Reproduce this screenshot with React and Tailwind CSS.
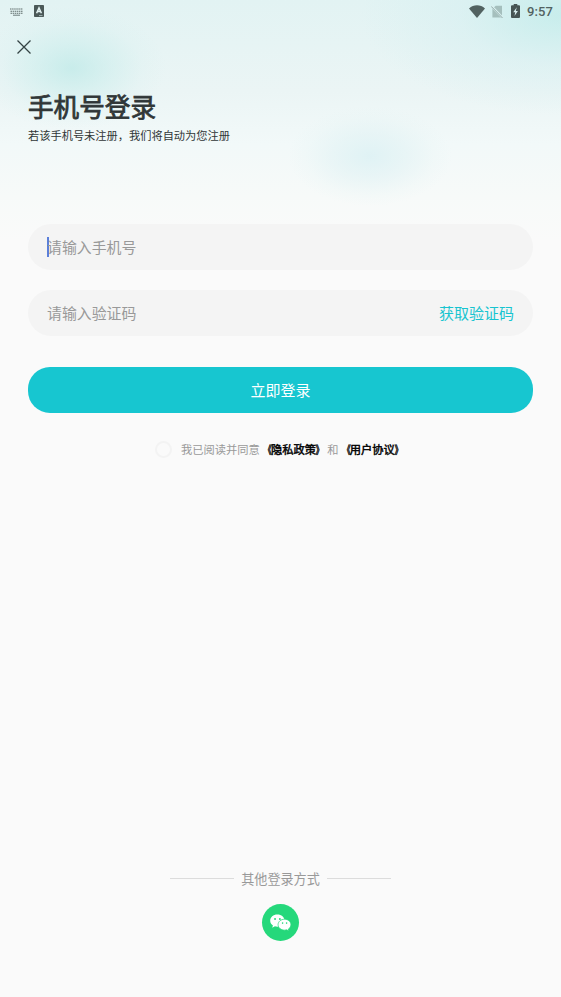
import React, { useState } from 'react';

const KeyboardIcon = () => (
  <svg width="13" height="8" viewBox="0 0 13 8" fill="none" stroke="#5f6d6c">
    <path d="M0 1h13M0.5 3.2h12M0.5 5.3h12" strokeWidth="1.1" strokeDasharray="1.5 0.6" />
    <path d="M3 7.2h7" strokeWidth="0.9" />
  </svg>
);

const InputMethodIcon = () => (
  <svg width="10" height="12" viewBox="0 0 10 12">
    <rect width="10" height="12" rx="0.8" fill="#4b5958" />
    <path d="M2.6 8.2 5 2.9 7.4 8.2M3.6 6.6h2.8" fill="none" stroke="#e4f3f3" strokeWidth="1.5" />
    <path d="M5 10.6h3.5" stroke="#c9dcdc" strokeWidth="0.7" />
  </svg>
);

const WifiIcon = () => (
  <svg width="16" height="13" viewBox="0 0 16 13" fill="#526261">
    <path d="M0 3.4C4.5-.9 11.5-.9 16 3.4L8 13Z" />
  </svg>
);

const NoSimIcon = () => (
  <svg width="12" height="13" viewBox="0 0 12 13">
    <path d="M2.2 3.1 4.8.7H11V12.4H1.4V3.6Z" fill="#a5bfbd" />
    <path d="M0 .6 12 13" stroke="#d9efef" strokeWidth="2.2" />
    <path d="M.2 1.4 11.5 13" stroke="#91aaa8" strokeWidth="1" />
  </svg>
);

const BatteryIcon = () => (
  <svg width="9" height="14" viewBox="0 0 9 14">
    <path d="M2.7 0h3.6v1.3H8Q9 1.3 9 2.3V13q0 1-1 1H1q-1 0-1-1V2.3q0-1 1-1h1.7Z" fill="#465554" />
    <path d="M5.8 3.2 2.2 8.2h2L3.5 12 6.9 6.9H4.8Z" fill="#d7eeee" />
  </svg>
);

const WechatIcon = () => (
  <svg width="21" height="18" viewBox="0 0 20 17">
    <path d="M7 .5C3.1.5.2 3 .2 6.3c0 1.9 1 3.5 2.6 4.6l-.7 2.1 2.6-1.3c.7.2 1.5.3 2.3.3 3.9 0 6.9-2.5 6.9-5.7S10.9.5 7 .5Z" fill="#fff" />
    <path d="M13.9 4.9c-3.5 0-6.2 2.3-6.2 5.2s2.7 5.2 6.2 5.2c.8 0 1.5-.1 2.1-.3l2 1.2-.5-1.9c1.4-1 2.4-2.4 2.4-4.2 0-2.9-2.5-5.2-6-5.2Z" fill="#fff" stroke="#25d87b" strokeWidth="0.7" />
    <g fill="#25d87b">
      <circle cx="4.8" cy="4.7" r="0.9" />
      <circle cx="9.4" cy="4.7" r="0.9" />
      <circle cx="12" cy="8.6" r="0.75" />
      <circle cx="15.8" cy="8.6" r="0.75" />
    </g>
  </svg>
);

const StatusBar = () => (
  <div className="flex h-[23px] items-center justify-between pl-[10px] pr-2">
    <div className="flex items-center gap-[11px]">
      <KeyboardIcon />
      <span className="-mt-px"><InputMethodIcon /></span>
    </div>
    <div className="flex items-center">
      <span className="-mt-px"><WifiIcon /></span>
      <span className="-mt-px ml-[6px]"><NoSimIcon /></span>
      <span className="-mt-[2px] ml-[8px]"><BatteryIcon /></span>
      <span className="ml-[7px] font-[Roboto,sans-serif] text-[13px] font-medium leading-none tracking-[0.1px] text-[#526261]">
        9:57
      </span>
    </div>
  </div>
);

// Policy link with tightened book title marks
const PolicyLink = ({ children }) => (
  <a className="flex text-black [-webkit-text-stroke:0.45px_#000]">
    <span className="origin-right translate-x-[0.5px] scale-x-[0.72]">《</span>
    <span>{children}</span>
    <span className="origin-left -translate-x-[0.5px] scale-x-[0.72]">》</span>
  </a>
);

const App = () => {
  const [phone, setPhone] = useState('');
  const [code, setCode] = useState('');
  const [agreed, setAgreed] = useState(false);

  return (
    <div className="relative flex h-[997px] w-[561px] flex-col overflow-hidden bg-[#fafafa] font-['Noto_Sans_CJK_SC',sans-serif]">
      {/* Header glow */}
      <div className="absolute inset-x-0 top-0 h-[240px] bg-[linear-gradient(180deg,#e2f3f3_0%,#ebf5f5_38%,#f2f9f9_60%,#f7faf9_82%,#fafafa_100%)]">
        <div className="h-full bg-[radial-gradient(ellipse_94px_62px_at_72px_68px,rgba(188,233,231,0.72),rgba(195,236,234,0.44)_40%,rgba(205,238,237,0.15)_75%,transparent),radial-gradient(ellipse_200px_100px_at_561px_15px,rgba(185,234,232,0.65),rgba(208,238,240,0.4)_50%,transparent),radial-gradient(ellipse_82px_50px_at_370px_156px,rgba(217,240,243,0.75),rgba(222,241,243,0.5)_45%,rgba(226,243,243,0.18)_78%,transparent)]" />
      </div>

      <div className="relative flex flex-1 flex-col">
        <StatusBar />

        <button className="ml-[17px] mt-[16.5px] h-[14px] w-[14px]" aria-label="关闭">
          <svg width="14" height="14" viewBox="0 0 14 14" stroke="#344344" strokeWidth="1.3">
            <path d="M.5.5l13 13M13.5.5l-13 13" />
          </svg>
        </button>

        <div className="mt-[33.5px] px-7">
          <h1 className="h-[38px] text-[25.6px] font-normal leading-[38px] text-[#303637] [-webkit-text-stroke:0.8px_#303637]">手机号登录</h1>
          <p className="mt-[2px] h-[17px] text-[11.23px] leading-[17px] text-[#303637]">若该手机号未注册，我们将自动为您注册</p>
        </div>

        <div className="mt-[80px] px-7">
          <div className="flex h-[46px] items-center rounded-full bg-[#f4f4f4] px-[19px]">
            <span className="-mr-[2px] h-5 w-[2px] bg-[#5b7fda]" />
            <input
              type="tel"
              value={phone}
              onChange={(e) => setPhone(e.target.value)}
              placeholder="请输入手机号"
              className="min-w-0 flex-1 text-[14.9px] text-[#303637] outline-none placeholder:text-[#999]"
            />
          </div>

          <div className="mt-5 flex h-[46px] items-center rounded-full bg-[#f4f4f4] px-[19px]">
            <input
              type="text"
              value={code}
              onChange={(e) => setCode(e.target.value)}
              placeholder="请输入验证码"
              className="min-w-0 flex-1 text-[14.9px] text-[#303637] outline-none placeholder:text-[#999]"
            />
            <button className="text-[15px] text-[#17c4d0]">获取验证码</button>
          </div>

          <button className="mt-[31px] h-[45.5px] w-full rounded-[22px] bg-[#17c6d0] text-[15px] text-white">
            立即登录
          </button>
        </div>

        <div className="mt-[27.5px] flex h-[18px] items-center pl-[155px] text-[11.25px] leading-[18px]">
          <button
            onClick={() => setAgreed(!agreed)}
            aria-label="同意协议"
            className={`mr-[9px] h-[17px] w-[17px] rounded-full border-2 border-[#f3f3f3] ${agreed ? 'bg-[#17c6d0]' : ''}`}
          />
          <span className="text-[#999]">我已阅读并同意</span>
          <PolicyLink>隐私政策</PolicyLink>
          <span className="text-[#999]">和</span>
          <PolicyLink>用户协议</PolicyLink>
        </div>

        {/* Third-party login */}
        <div className="mb-[56px] mt-auto flex flex-col items-center">
          <div className="flex h-5 items-center">
            <span className="-mt-px h-px w-[64px] bg-[#dcdcdc]" />
            <span className="mx-[7px] text-[13.1px] leading-5 text-[#999]">其他登录方式</span>
            <span className="-mt-px h-px w-[64px] bg-[#dcdcdc]" />
          </div>
          <button
            aria-label="微信登录"
            className="mt-[15px] flex h-[37px] w-[37px] items-center justify-center rounded-full bg-[#25d87b]"
          >
            <WechatIcon />
          </button>
        </div>
      </div>
    </div>
  );
};

export default App;
